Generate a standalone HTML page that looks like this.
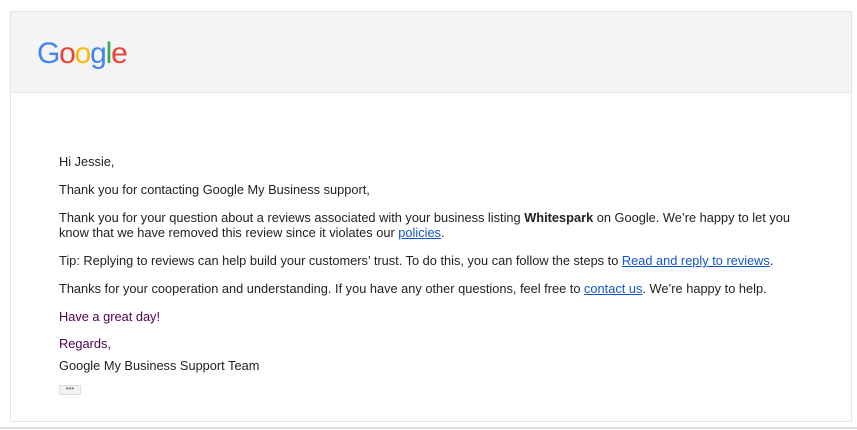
<!DOCTYPE html>
<html><head><meta charset="utf-8"><style>
body{margin:0;background:#fff;width:857px;height:430px;position:relative;font-family:"Liberation Sans",Arial,sans-serif;font-size:12.8px;color:#222;overflow:hidden}
.box{position:absolute;left:10px;top:11px;width:840px;height:409px;border:1px solid #e5e5e5}
.hdr{height:80px;background:#f4f4f4;border-bottom:1px solid #e5e5e5;position:relative}
.logo{position:absolute;left:26px;top:25px;font-size:30px;letter-spacing:-1.2px;line-height:34px}
.t{position:absolute;left:48px;line-height:15px;white-space:nowrap}
a{color:#15c;text-decoration:underline}
.p{color:#500050}
.dots{position:absolute;left:48px;top:373px;width:20px;height:8px;background:#f1f1f1;border:1px solid #ddd;font-size:8px;line-height:6px;text-align:center;color:#777;letter-spacing:0}
.bl{position:absolute;left:0;top:427px;width:857px;height:2px;background:#e0e0e0}
</style></head><body>
<div class="box">
<div class="hdr"><div class="logo"><span style="color:#4285f4">G</span><span style="color:#ea4335">o</span><span style="color:#fbbc05">o</span><span style="color:#4285f4">g</span><span style="color:#34a853">l</span><span style="color:#ea4335">e</span></div></div>
<div class="t" style="top:142px">Hi Jessie,</div>
<div class="t" style="top:170px">Thank you for contacting Google My Business support,</div>
<div class="t" style="top:198px">Thank you for your question about a reviews associated with your business listing <b>Whitespark</b> on Google. We’re happy to let you<br>know that we have removed this review since it violates our <a>policies</a>.</div>
<div class="t" style="top:241px">Tip: Replying to reviews can help build your customers’ trust. To do this, you can follow the steps to <a>Read and reply to reviews</a>.</div>
<div class="t" style="top:269px">Thanks for your cooperation and understanding. If you have any other questions, feel free to <a>contact us</a>. We’re happy to help.</div>
<div class="t p" style="top:297px">Have a great day!</div>
<div class="t p" style="top:324px">Regards,</div>
<div class="t" style="top:346px">Google My Business Support Team</div>
<div class="dots">•••</div>
</div>
<div class="bl"></div>
</body></html>
